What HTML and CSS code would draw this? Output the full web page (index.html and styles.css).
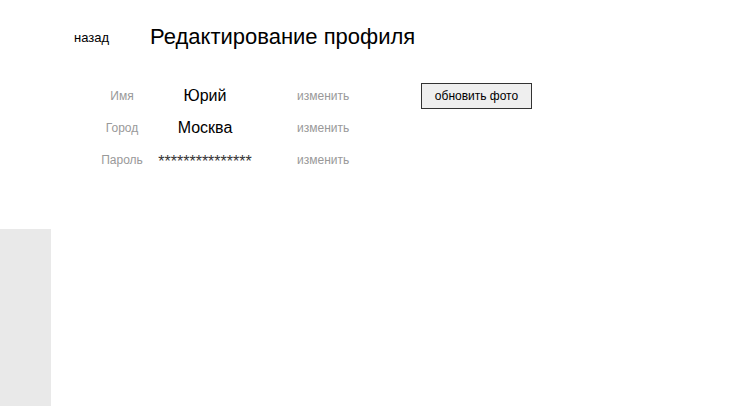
FILE: index.html
```html
<!DOCTYPE html>
<html lang="ru">
<head>
<meta charset="utf-8">
<link rel="stylesheet" href="styles.css">
</head>
<body>
<div class="page">
  <header class="head">
    <a class="back">назад</a>
    <h1 class="title">Редактирование профиля</h1>
  </header>
  <div class="form">
    <div class="label">Имя</div>
    <div class="value">Юрий</div>
    <a class="edit">изменить</a>
    <div class="photo"><button class="btn">обновить фото</button></div>

    <div class="label">Город</div>
    <div class="value">Москва</div>
    <a class="edit">изменить</a>
    <div></div>

    <div class="label">Пароль</div>
    <div class="value stars">***************</div>
    <a class="edit">изменить</a>
    <div></div>
  </div>
</div>
<aside class="side"></aside>
</body>
</html>
```
FILE: styles.css
```css
html, body {
  margin: 0;
  padding: 0;
  background: #fff;
}
body {
  width: 742px;
  height: 406px;
  position: relative;
  font-family: "Liberation Sans", Arial, sans-serif;
  color: #000;
  overflow: hidden;
}
.page {
  padding-top: 22px;
}
.head {
  display: flex;
  align-items: center;
  height: 30px;
  padding-left: 74px;
}
.back {
  font-size: 13px;
  width: 76px;
  color: #000;
}
.title {
  margin: 0;
  font-size: 22px;
  font-weight: normal;
}
.form {
  margin-top: 28px;
  padding-left: 92px;
  display: grid;
  grid-template-columns: 60px 106px 163px auto;
  grid-auto-rows: 32px;
  align-items: center;
}
.label {
  text-align: center;
  font-size: 12px;
  color: #999;
}
.value {
  text-align: center;
  font-size: 16px;
}
.value.stars {
  font-size: 16px;
  color: #333;
  padding-top: 4px;
}
.edit {
  font-size: 12px;
  color: #999;
  padding-left: 39px;
}
.btn {
  font-family: "Liberation Sans", Arial, sans-serif;
  font-size: 12px;
  color: #000;
  background: #efefef;
  border: 1px solid #333;
  width: 111px;
  height: 26px;
  padding: 0;
}
.side {
  position: absolute;
  left: 0;
  top: 229px;
  width: 51px;
  height: 177px;
  background: #e9e9e9;
}
```
